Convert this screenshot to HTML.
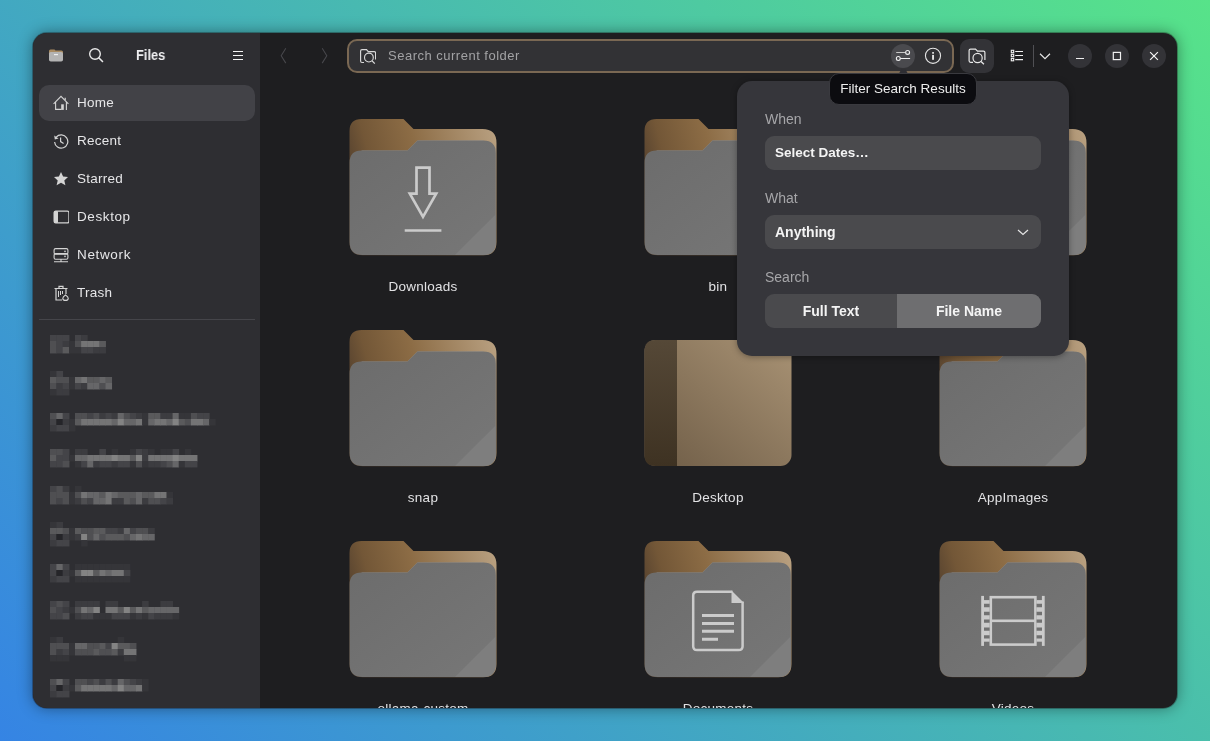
<!DOCTYPE html>
<html><head><meta charset="utf-8">
<style>
*{margin:0;padding:0;box-sizing:border-box}
html,body{width:1210px;height:741px;overflow:hidden}
body{background:linear-gradient(45deg,#3584e4 0%,#57e389 100%);font-family:"Liberation Sans",sans-serif;position:relative}
.abs{position:absolute}
#win{position:absolute;left:33px;top:33px;width:1144px;height:675px;border-radius:14px;overflow:hidden;background:#1e1e20;box-shadow:0 0 0 1px rgba(20,10,10,0.3),0 0 15px rgba(0,0,0,0.42)}
#side{position:absolute;left:0;top:0;width:227px;height:675px;background:#2e2e32}
.t{position:absolute;white-space:nowrap;will-change:transform;color:#e6e6e8;font-size:13.5px;line-height:16px}
.row{position:absolute;left:6px;width:216px;height:36px;border-radius:10px}
.row.sel{background:#424247}
.ico{position:absolute}
.lbl{position:absolute;will-change:transform;width:200px;text-align:center;color:#e2e2e4;font-size:13.5px;line-height:16px;letter-spacing:0.25px}
</style></head><body>
<div id="win">
  <div id="side">
    <!-- header -->
    <svg class="ico" style="left:15px;top:14px" width="16" height="16" viewBox="0 0 16 16">
      <path d="M1,4 Q1,2.5 2.5,2.5 H6.5 L7.5,3.5 H13.5 Q15,3.5 15,5 V8 H1Z" fill="#a98b62"/>
      <rect x="1" y="5" width="14" height="9.5" rx="1.8" fill="#b4b4b4"/>
      <rect x="6" y="7" width="4" height="1.2" fill="#f0f0f0"/>
    </svg>
    <svg class="ico" style="left:55px;top:14px" width="16" height="16" viewBox="0 0 16 16">
      <circle cx="7" cy="7" r="5.3" fill="none" stroke="#e8e8e8" stroke-width="1.4"/>
      <path d="M11,11 L14.5,14.5" stroke="#e8e8e8" stroke-width="1.6" stroke-linecap="round"/>
    </svg>
    <div class="t" style="left:102.6px;top:14.3px;font-weight:bold;font-size:14px;color:#f0f0f2;transform:scaleX(0.92);transform-origin:0 0">Files</div>
    <div class="abs" style="left:200px;top:18px;width:10px;height:1px;background:#f4f4f4"></div>
    <div class="abs" style="left:200px;top:22px;width:10px;height:1px;background:#f4f4f4"></div>
    <div class="abs" style="left:200px;top:26px;width:10px;height:1px;background:#f4f4f4"></div>

    <div class="row sel" style="top:52px"></div>
    <!-- Home -->
    <svg class="ico" style="left:20px;top:62px" width="16" height="16" viewBox="0 0 16 16">
      <path d="M0.6,8.9 L8,1.4 L15.4,8.9 M2.6,6.9 V14.4 H8.5 M13.4,6.9 V15" fill="none" stroke="#d4d4d4" stroke-width="1.1"/>
      <rect x="8.2" y="9.3" width="2.6" height="5.6" fill="#d4d4d4"/>
      <path d="M12.2,2.8 V4.9" stroke="#d4d4d4" stroke-width="1.2"/>
    </svg>
    <div class="t" style="left:44px;top:62px;letter-spacing:0.25px">Home</div>
    <!-- Recent -->
    <svg class="ico" style="left:20px;top:100px" width="16" height="16" viewBox="0 0 16 16">
      <path d="M3.2,4.2 A6.6,6.6 0 1 1 1.6,9" fill="none" stroke="#d4d4d4" stroke-width="1.2"/>
      <path d="M1.2,2.5 L1.8,6.5 L5.5,5.6Z" fill="#d4d4d4"/>
      <path d="M7.6,4.5 V8.6 L10.6,10.6" fill="none" stroke="#d4d4d4" stroke-width="1.2"/>
    </svg>
    <div class="t" style="left:44px;top:100px;letter-spacing:0.25px">Recent</div>
    <!-- Starred -->
    <svg class="ico" style="left:20px;top:138px" width="16" height="16" viewBox="0 0 16 16">
      <path d="M8,1 L10.1,5.6 L15,6.1 L11.3,9.4 L12.4,14.3 L8,11.7 L3.6,14.3 L4.7,9.4 L1,6.1 L5.9,5.6Z" fill="#d4d4d4"/>
    </svg>
    <div class="t" style="left:44px;top:138px;letter-spacing:0.25px">Starred</div>
    <!-- Desktop -->
    <svg class="ico" style="left:20px;top:176px" width="16" height="16" viewBox="0 0 16 16">
      <rect x="1.1" y="2.1" width="14.8" height="11.8" rx="1.6" fill="none" stroke="#d4d4d4" stroke-width="1.2"/>
      <rect x="1" y="2" width="4" height="12" rx="1" fill="#d4d4d4"/>
    </svg>
    <div class="t" style="left:44px;top:176px;letter-spacing:0.6px">Desktop</div>
    <!-- Network -->
    <svg class="ico" style="left:20px;top:214px" width="16" height="16" viewBox="0 0 16 16">
      <rect x="1.1" y="1.6" width="13.8" height="5.6" rx="1.5" fill="none" stroke="#d4d4d4" stroke-width="1.1"/>
      <rect x="1.1" y="6.6" width="13.8" height="5.6" rx="1.5" fill="none" stroke="#d4d4d4" stroke-width="1.1"/>
      <path d="M1,14.8 H15 M8,12 V14.8" stroke="#d4d4d4" stroke-width="1.1"/>
      <circle cx="12" cy="4.4" r="0.8" fill="#d4d4d4"/><circle cx="12" cy="9.4" r="0.8" fill="#d4d4d4"/>
    </svg>
    <div class="t" style="left:44px;top:214px;letter-spacing:0.65px">Network</div>
    <!-- Trash -->
    <svg class="ico" style="left:20px;top:252px" width="16" height="16" viewBox="0 0 16 16">
      <path d="M1.5,3.5 H14.5 M6,3.5 V1.3 H10 V3.5" fill="none" stroke="#d4d4d4" stroke-width="1.2"/>
      <path d="M3,4 V15 H9 M13,4 V9" fill="none" stroke="#d4d4d4" stroke-width="1.2"/>
      <path d="M5.5,6 V12 M7.5,6 V10 M9.5,6 V9" stroke="#d4d4d4" stroke-width="1"/>
      <path d="M12.5,10 Q15.5,12 15.2,13.6 Q15,15.4 12.5,15.4 Q10,15.4 9.8,13.6 Q9.6,12 12.5,10Z" fill="none" stroke="#d4d4d4" stroke-width="1.1"/>
    </svg>
    <div class="t" style="left:44px;top:252px;letter-spacing:0.25px">Trash</div>

    <div class="abs" style="left:6px;top:286px;width:216px;height:1px;background:#45454a"></div>
    <div id="blur"><svg class="abs" style="left:-33px;top:-33px" width="260" height="741" viewBox="0 0 260 741"><rect x="50.00" y="335" width="6.78" height="6.45" fill="#444448"/><rect x="56.33" y="335" width="6.78" height="6.45" fill="#444448"/><rect x="62.66" y="335" width="6.78" height="6.45" fill="#444448"/><rect x="75.00" y="335" width="6.55" height="6.45" fill="#444448"/><rect x="81.10" y="335" width="6.55" height="6.45" fill="#3c3c40"/><rect x="50.00" y="341" width="6.78" height="6.45" fill="#4f4f52"/><rect x="56.33" y="341" width="6.78" height="6.45" fill="#444448"/><rect x="62.66" y="341" width="6.78" height="6.45" fill="#3c3c40"/><rect x="69.00" y="341" width="6.45" height="6.45" fill="#353539"/><rect x="75.00" y="341" width="6.55" height="6.45" fill="#4f4f52"/><rect x="81.10" y="341" width="6.55" height="6.45" fill="#747475"/><rect x="87.20" y="341" width="6.55" height="6.45" fill="#747475"/><rect x="93.30" y="341" width="6.55" height="6.45" fill="#747475"/><rect x="99.40" y="341" width="6.55" height="6.45" fill="#5a5a5c"/><rect x="50.00" y="347" width="6.78" height="6.45" fill="#4f4f52"/><rect x="56.33" y="347" width="6.78" height="6.45" fill="#444448"/><rect x="62.66" y="347" width="6.78" height="6.45" fill="#5a5a5c"/><rect x="69.00" y="347" width="6.45" height="6.45" fill="#353539"/><rect x="75.00" y="347" width="6.55" height="6.45" fill="#353539"/><rect x="81.10" y="347" width="6.55" height="6.45" fill="#444448"/><rect x="87.20" y="347" width="6.55" height="6.45" fill="#444448"/><rect x="93.30" y="347" width="6.55" height="6.45" fill="#3c3c40"/><rect x="99.40" y="347" width="6.55" height="6.45" fill="#3c3c40"/><rect x="50.00" y="371" width="6.78" height="6.45" fill="#353539"/><rect x="56.33" y="371" width="6.78" height="6.45" fill="#444448"/><rect x="50.00" y="377" width="6.78" height="6.45" fill="#5a5a5c"/><rect x="56.33" y="377" width="6.78" height="6.45" fill="#4f4f52"/><rect x="62.66" y="377" width="6.78" height="6.45" fill="#4f4f52"/><rect x="69.00" y="377" width="6.45" height="6.45" fill="#353539"/><rect x="75.00" y="377" width="6.55" height="6.45" fill="#666668"/><rect x="81.10" y="377" width="6.55" height="6.45" fill="#747475"/><rect x="87.20" y="377" width="6.55" height="6.45" fill="#5a5a5c"/><rect x="93.30" y="377" width="6.55" height="6.45" fill="#5a5a5c"/><rect x="99.40" y="377" width="6.55" height="6.45" fill="#666668"/><rect x="105.50" y="377" width="6.55" height="6.45" fill="#5a5a5c"/><rect x="50.00" y="383" width="6.78" height="6.45" fill="#4f4f52"/><rect x="56.33" y="383" width="6.78" height="6.45" fill="#3c3c40"/><rect x="62.66" y="383" width="6.78" height="6.45" fill="#444448"/><rect x="69.00" y="383" width="6.45" height="6.45" fill="#353539"/><rect x="75.00" y="383" width="6.55" height="6.45" fill="#444448"/><rect x="81.10" y="383" width="6.55" height="6.45" fill="#3c3c40"/><rect x="87.20" y="383" width="6.55" height="6.45" fill="#666668"/><rect x="93.30" y="383" width="6.55" height="6.45" fill="#666668"/><rect x="99.40" y="383" width="6.55" height="6.45" fill="#4f4f52"/><rect x="105.50" y="383" width="6.55" height="6.45" fill="#666668"/><rect x="50.00" y="389" width="6.78" height="6.45" fill="#353539"/><rect x="56.33" y="389" width="6.78" height="6.45" fill="#3c3c40"/><rect x="62.66" y="389" width="6.78" height="6.45" fill="#3c3c40"/><rect x="50.00" y="413" width="6.78" height="6.45" fill="#4f4f52"/><rect x="56.33" y="413" width="6.78" height="6.45" fill="#666668"/><rect x="62.66" y="413" width="6.78" height="6.45" fill="#444448"/><rect x="75.00" y="413" width="6.55" height="6.45" fill="#4f4f52"/><rect x="81.10" y="413" width="6.55" height="6.45" fill="#4f4f52"/><rect x="87.20" y="413" width="6.55" height="6.45" fill="#444448"/><rect x="93.30" y="413" width="6.55" height="6.45" fill="#4f4f52"/><rect x="99.40" y="413" width="6.55" height="6.45" fill="#3c3c40"/><rect x="105.50" y="413" width="6.55" height="6.45" fill="#444448"/><rect x="111.60" y="413" width="6.55" height="6.45" fill="#3c3c40"/><rect x="117.70" y="413" width="6.55" height="6.45" fill="#666668"/><rect x="123.80" y="413" width="6.55" height="6.45" fill="#4f4f52"/><rect x="129.90" y="413" width="6.55" height="6.45" fill="#444448"/><rect x="136.00" y="413" width="6.55" height="6.45" fill="#3c3c40"/><rect x="142.10" y="413" width="6.55" height="6.45" fill="#353539"/><rect x="148.20" y="413" width="6.55" height="6.45" fill="#5a5a5c"/><rect x="154.30" y="413" width="6.55" height="6.45" fill="#5a5a5c"/><rect x="160.40" y="413" width="6.55" height="6.45" fill="#3c3c40"/><rect x="166.50" y="413" width="6.55" height="6.45" fill="#3c3c40"/><rect x="172.60" y="413" width="6.55" height="6.45" fill="#666668"/><rect x="178.70" y="413" width="6.55" height="6.45" fill="#353539"/><rect x="184.80" y="413" width="6.55" height="6.45" fill="#353539"/><rect x="190.90" y="413" width="6.55" height="6.45" fill="#4f4f52"/><rect x="197.00" y="413" width="6.55" height="6.45" fill="#444448"/><rect x="203.10" y="413" width="6.55" height="6.45" fill="#444448"/><rect x="50.00" y="419" width="6.78" height="6.45" fill="#444448"/><rect x="56.33" y="419" width="6.78" height="6.45" fill="#252529"/><rect x="62.66" y="419" width="6.78" height="6.45" fill="#3c3c40"/><rect x="69.00" y="419" width="6.45" height="6.45" fill="#353539"/><rect x="75.00" y="419" width="6.55" height="6.45" fill="#5a5a5c"/><rect x="81.10" y="419" width="6.55" height="6.45" fill="#747475"/><rect x="87.20" y="419" width="6.55" height="6.45" fill="#747475"/><rect x="93.30" y="419" width="6.55" height="6.45" fill="#747475"/><rect x="99.40" y="419" width="6.55" height="6.45" fill="#747475"/><rect x="105.50" y="419" width="6.55" height="6.45" fill="#747475"/><rect x="111.60" y="419" width="6.55" height="6.45" fill="#666668"/><rect x="117.70" y="419" width="6.55" height="6.45" fill="#838383"/><rect x="123.80" y="419" width="6.55" height="6.45" fill="#666668"/><rect x="129.90" y="419" width="6.55" height="6.45" fill="#666668"/><rect x="136.00" y="419" width="6.55" height="6.45" fill="#747475"/><rect x="142.10" y="419" width="6.55" height="6.45" fill="#353539"/><rect x="148.20" y="419" width="6.55" height="6.45" fill="#666668"/><rect x="154.30" y="419" width="6.55" height="6.45" fill="#747475"/><rect x="160.40" y="419" width="6.55" height="6.45" fill="#747475"/><rect x="166.50" y="419" width="6.55" height="6.45" fill="#666668"/><rect x="172.60" y="419" width="6.55" height="6.45" fill="#838383"/><rect x="178.70" y="419" width="6.55" height="6.45" fill="#5a5a5c"/><rect x="184.80" y="419" width="6.55" height="6.45" fill="#4f4f52"/><rect x="190.90" y="419" width="6.55" height="6.45" fill="#747475"/><rect x="197.00" y="419" width="6.55" height="6.45" fill="#747475"/><rect x="203.10" y="419" width="6.55" height="6.45" fill="#666668"/><rect x="209.20" y="419" width="6.55" height="6.45" fill="#353539"/><rect x="50.00" y="425" width="6.78" height="6.45" fill="#3c3c40"/><rect x="56.33" y="425" width="6.78" height="6.45" fill="#444448"/><rect x="62.66" y="425" width="6.78" height="6.45" fill="#444448"/><rect x="69.00" y="425" width="6.45" height="6.45" fill="#353539"/><rect x="50.00" y="449" width="6.78" height="6.45" fill="#4f4f52"/><rect x="56.33" y="449" width="6.78" height="6.45" fill="#4f4f52"/><rect x="62.66" y="449" width="6.78" height="6.45" fill="#444448"/><rect x="75.00" y="449" width="6.55" height="6.45" fill="#3c3c40"/><rect x="81.10" y="449" width="6.55" height="6.45" fill="#3c3c40"/><rect x="99.40" y="449" width="6.55" height="6.45" fill="#444448"/><rect x="111.60" y="449" width="6.55" height="6.45" fill="#353539"/><rect x="129.90" y="449" width="6.55" height="6.45" fill="#353539"/><rect x="136.00" y="449" width="6.55" height="6.45" fill="#444448"/><rect x="142.10" y="449" width="6.55" height="6.45" fill="#3c3c40"/><rect x="148.20" y="449" width="6.55" height="6.45" fill="#353539"/><rect x="160.40" y="449" width="6.55" height="6.45" fill="#353539"/><rect x="166.50" y="449" width="6.55" height="6.45" fill="#353539"/><rect x="172.60" y="449" width="6.55" height="6.45" fill="#444448"/><rect x="184.80" y="449" width="6.55" height="6.45" fill="#353539"/><rect x="50.00" y="455" width="6.78" height="6.45" fill="#5a5a5c"/><rect x="56.33" y="455" width="6.78" height="6.45" fill="#444448"/><rect x="62.66" y="455" width="6.78" height="6.45" fill="#444448"/><rect x="69.00" y="455" width="6.45" height="6.45" fill="#353539"/><rect x="75.00" y="455" width="6.55" height="6.45" fill="#666668"/><rect x="81.10" y="455" width="6.55" height="6.45" fill="#666668"/><rect x="87.20" y="455" width="6.55" height="6.45" fill="#747475"/><rect x="93.30" y="455" width="6.55" height="6.45" fill="#747475"/><rect x="99.40" y="455" width="6.55" height="6.45" fill="#747475"/><rect x="105.50" y="455" width="6.55" height="6.45" fill="#747475"/><rect x="111.60" y="455" width="6.55" height="6.45" fill="#838383"/><rect x="117.70" y="455" width="6.55" height="6.45" fill="#747475"/><rect x="123.80" y="455" width="6.55" height="6.45" fill="#747475"/><rect x="129.90" y="455" width="6.55" height="6.45" fill="#5a5a5c"/><rect x="136.00" y="455" width="6.55" height="6.45" fill="#838383"/><rect x="142.10" y="455" width="6.55" height="6.45" fill="#3c3c40"/><rect x="148.20" y="455" width="6.55" height="6.45" fill="#747475"/><rect x="154.30" y="455" width="6.55" height="6.45" fill="#747475"/><rect x="160.40" y="455" width="6.55" height="6.45" fill="#747475"/><rect x="166.50" y="455" width="6.55" height="6.45" fill="#747475"/><rect x="172.60" y="455" width="6.55" height="6.45" fill="#838383"/><rect x="178.70" y="455" width="6.55" height="6.45" fill="#747475"/><rect x="184.80" y="455" width="6.55" height="6.45" fill="#747475"/><rect x="190.90" y="455" width="6.55" height="6.45" fill="#747475"/><rect x="50.00" y="461" width="6.78" height="6.45" fill="#444448"/><rect x="56.33" y="461" width="6.78" height="6.45" fill="#444448"/><rect x="62.66" y="461" width="6.78" height="6.45" fill="#4f4f52"/><rect x="75.00" y="461" width="6.55" height="6.45" fill="#353539"/><rect x="81.10" y="461" width="6.55" height="6.45" fill="#444448"/><rect x="87.20" y="461" width="6.55" height="6.45" fill="#666668"/><rect x="93.30" y="461" width="6.55" height="6.45" fill="#3c3c40"/><rect x="99.40" y="461" width="6.55" height="6.45" fill="#444448"/><rect x="105.50" y="461" width="6.55" height="6.45" fill="#444448"/><rect x="111.60" y="461" width="6.55" height="6.45" fill="#3c3c40"/><rect x="117.70" y="461" width="6.55" height="6.45" fill="#444448"/><rect x="123.80" y="461" width="6.55" height="6.45" fill="#444448"/><rect x="129.90" y="461" width="6.55" height="6.45" fill="#353539"/><rect x="136.00" y="461" width="6.55" height="6.45" fill="#4f4f52"/><rect x="142.10" y="461" width="6.55" height="6.45" fill="#353539"/><rect x="148.20" y="461" width="6.55" height="6.45" fill="#3c3c40"/><rect x="154.30" y="461" width="6.55" height="6.45" fill="#3c3c40"/><rect x="160.40" y="461" width="6.55" height="6.45" fill="#444448"/><rect x="166.50" y="461" width="6.55" height="6.45" fill="#4f4f52"/><rect x="172.60" y="461" width="6.55" height="6.45" fill="#666668"/><rect x="178.70" y="461" width="6.55" height="6.45" fill="#353539"/><rect x="184.80" y="461" width="6.55" height="6.45" fill="#444448"/><rect x="190.90" y="461" width="6.55" height="6.45" fill="#444448"/><rect x="50.00" y="486" width="6.78" height="6.45" fill="#444448"/><rect x="56.33" y="486" width="6.78" height="6.45" fill="#4f4f52"/><rect x="62.66" y="486" width="6.78" height="6.45" fill="#3c3c40"/><rect x="75.00" y="486" width="6.55" height="6.45" fill="#353539"/><rect x="50.00" y="492" width="6.78" height="6.45" fill="#4f4f52"/><rect x="56.33" y="492" width="6.78" height="6.45" fill="#4f4f52"/><rect x="62.66" y="492" width="6.78" height="6.45" fill="#4f4f52"/><rect x="69.00" y="492" width="6.45" height="6.45" fill="#353539"/><rect x="75.00" y="492" width="6.55" height="6.45" fill="#4f4f52"/><rect x="81.10" y="492" width="6.55" height="6.45" fill="#747475"/><rect x="87.20" y="492" width="6.55" height="6.45" fill="#666668"/><rect x="93.30" y="492" width="6.55" height="6.45" fill="#666668"/><rect x="99.40" y="492" width="6.55" height="6.45" fill="#5a5a5c"/><rect x="105.50" y="492" width="6.55" height="6.45" fill="#747475"/><rect x="111.60" y="492" width="6.55" height="6.45" fill="#666668"/><rect x="117.70" y="492" width="6.55" height="6.45" fill="#5a5a5c"/><rect x="123.80" y="492" width="6.55" height="6.45" fill="#5a5a5c"/><rect x="129.90" y="492" width="6.55" height="6.45" fill="#5a5a5c"/><rect x="136.00" y="492" width="6.55" height="6.45" fill="#666668"/><rect x="142.10" y="492" width="6.55" height="6.45" fill="#5a5a5c"/><rect x="148.20" y="492" width="6.55" height="6.45" fill="#5a5a5c"/><rect x="154.30" y="492" width="6.55" height="6.45" fill="#747475"/><rect x="160.40" y="492" width="6.55" height="6.45" fill="#747475"/><rect x="166.50" y="492" width="6.55" height="6.45" fill="#353539"/><rect x="50.00" y="498" width="6.78" height="6.45" fill="#4f4f52"/><rect x="56.33" y="498" width="6.78" height="6.45" fill="#444448"/><rect x="62.66" y="498" width="6.78" height="6.45" fill="#4f4f52"/><rect x="69.00" y="498" width="6.45" height="6.45" fill="#353539"/><rect x="75.00" y="498" width="6.55" height="6.45" fill="#3c3c40"/><rect x="81.10" y="498" width="6.55" height="6.45" fill="#4f4f52"/><rect x="87.20" y="498" width="6.55" height="6.45" fill="#444448"/><rect x="93.30" y="498" width="6.55" height="6.45" fill="#666668"/><rect x="99.40" y="498" width="6.55" height="6.45" fill="#666668"/><rect x="105.50" y="498" width="6.55" height="6.45" fill="#747475"/><rect x="111.60" y="498" width="6.55" height="6.45" fill="#3c3c40"/><rect x="117.70" y="498" width="6.55" height="6.45" fill="#3c3c40"/><rect x="123.80" y="498" width="6.55" height="6.45" fill="#5a5a5c"/><rect x="129.90" y="498" width="6.55" height="6.45" fill="#4f4f52"/><rect x="136.00" y="498" width="6.55" height="6.45" fill="#666668"/><rect x="142.10" y="498" width="6.55" height="6.45" fill="#3c3c40"/><rect x="148.20" y="498" width="6.55" height="6.45" fill="#4f4f52"/><rect x="154.30" y="498" width="6.55" height="6.45" fill="#4f4f52"/><rect x="160.40" y="498" width="6.55" height="6.45" fill="#444448"/><rect x="166.50" y="498" width="6.55" height="6.45" fill="#3c3c40"/><rect x="50.00" y="522" width="6.78" height="6.45" fill="#353539"/><rect x="56.33" y="522" width="6.78" height="6.45" fill="#3c3c40"/><rect x="50.00" y="528" width="6.78" height="6.45" fill="#5a5a5c"/><rect x="56.33" y="528" width="6.78" height="6.45" fill="#5a5a5c"/><rect x="62.66" y="528" width="6.78" height="6.45" fill="#4f4f52"/><rect x="69.00" y="528" width="6.45" height="6.45" fill="#353539"/><rect x="75.00" y="528" width="6.55" height="6.45" fill="#5a5a5c"/><rect x="81.10" y="528" width="6.55" height="6.45" fill="#4f4f52"/><rect x="87.20" y="528" width="6.55" height="6.45" fill="#4f4f52"/><rect x="93.30" y="528" width="6.55" height="6.45" fill="#5a5a5c"/><rect x="99.40" y="528" width="6.55" height="6.45" fill="#5a5a5c"/><rect x="105.50" y="528" width="6.55" height="6.45" fill="#444448"/><rect x="111.60" y="528" width="6.55" height="6.45" fill="#444448"/><rect x="117.70" y="528" width="6.55" height="6.45" fill="#3c3c40"/><rect x="123.80" y="528" width="6.55" height="6.45" fill="#666668"/><rect x="129.90" y="528" width="6.55" height="6.45" fill="#444448"/><rect x="136.00" y="528" width="6.55" height="6.45" fill="#4f4f52"/><rect x="142.10" y="528" width="6.55" height="6.45" fill="#4f4f52"/><rect x="148.20" y="528" width="6.55" height="6.45" fill="#3c3c40"/><rect x="50.00" y="534" width="6.78" height="6.45" fill="#444448"/><rect x="56.33" y="534" width="6.78" height="6.45" fill="#252529"/><rect x="62.66" y="534" width="6.78" height="6.45" fill="#3c3c40"/><rect x="69.00" y="534" width="6.45" height="6.45" fill="#353539"/><rect x="75.00" y="534" width="6.55" height="6.45" fill="#3c3c40"/><rect x="81.10" y="534" width="6.55" height="6.45" fill="#838383"/><rect x="87.20" y="534" width="6.55" height="6.45" fill="#4f4f52"/><rect x="93.30" y="534" width="6.55" height="6.45" fill="#666668"/><rect x="99.40" y="534" width="6.55" height="6.45" fill="#4f4f52"/><rect x="105.50" y="534" width="6.55" height="6.45" fill="#5a5a5c"/><rect x="111.60" y="534" width="6.55" height="6.45" fill="#5a5a5c"/><rect x="117.70" y="534" width="6.55" height="6.45" fill="#5a5a5c"/><rect x="123.80" y="534" width="6.55" height="6.45" fill="#4f4f52"/><rect x="129.90" y="534" width="6.55" height="6.45" fill="#666668"/><rect x="136.00" y="534" width="6.55" height="6.45" fill="#747475"/><rect x="142.10" y="534" width="6.55" height="6.45" fill="#666668"/><rect x="148.20" y="534" width="6.55" height="6.45" fill="#666668"/><rect x="50.00" y="540" width="6.78" height="6.45" fill="#3c3c40"/><rect x="56.33" y="540" width="6.78" height="6.45" fill="#444448"/><rect x="62.66" y="540" width="6.78" height="6.45" fill="#444448"/><rect x="81.10" y="540" width="6.55" height="6.45" fill="#353539"/><rect x="50.00" y="564" width="6.78" height="6.45" fill="#444448"/><rect x="56.33" y="564" width="6.78" height="6.45" fill="#666668"/><rect x="62.66" y="564" width="6.78" height="6.45" fill="#444448"/><rect x="75.00" y="564" width="6.55" height="6.45" fill="#353539"/><rect x="81.10" y="564" width="6.55" height="6.45" fill="#353539"/><rect x="87.20" y="564" width="6.55" height="6.45" fill="#353539"/><rect x="93.30" y="564" width="6.55" height="6.45" fill="#353539"/><rect x="99.40" y="564" width="6.55" height="6.45" fill="#353539"/><rect x="105.50" y="564" width="6.55" height="6.45" fill="#353539"/><rect x="111.60" y="564" width="6.55" height="6.45" fill="#353539"/><rect x="117.70" y="564" width="6.55" height="6.45" fill="#353539"/><rect x="123.80" y="564" width="6.55" height="6.45" fill="#353539"/><rect x="50.00" y="570" width="6.78" height="6.45" fill="#444448"/><rect x="56.33" y="570" width="6.78" height="6.45" fill="#252529"/><rect x="62.66" y="570" width="6.78" height="6.45" fill="#3c3c40"/><rect x="69.00" y="570" width="6.45" height="6.45" fill="#353539"/><rect x="75.00" y="570" width="6.55" height="6.45" fill="#5a5a5c"/><rect x="81.10" y="570" width="6.55" height="6.45" fill="#838383"/><rect x="87.20" y="570" width="6.55" height="6.45" fill="#838383"/><rect x="93.30" y="570" width="6.55" height="6.45" fill="#5a5a5c"/><rect x="99.40" y="570" width="6.55" height="6.45" fill="#747475"/><rect x="105.50" y="570" width="6.55" height="6.45" fill="#666668"/><rect x="111.60" y="570" width="6.55" height="6.45" fill="#747475"/><rect x="117.70" y="570" width="6.55" height="6.45" fill="#747475"/><rect x="123.80" y="570" width="6.55" height="6.45" fill="#444448"/><rect x="50.00" y="576" width="6.78" height="6.45" fill="#3c3c40"/><rect x="56.33" y="576" width="6.78" height="6.45" fill="#444448"/><rect x="62.66" y="576" width="6.78" height="6.45" fill="#444448"/><rect x="75.00" y="576" width="6.55" height="6.45" fill="#353539"/><rect x="81.10" y="576" width="6.55" height="6.45" fill="#353539"/><rect x="87.20" y="576" width="6.55" height="6.45" fill="#353539"/><rect x="93.30" y="576" width="6.55" height="6.45" fill="#353539"/><rect x="99.40" y="576" width="6.55" height="6.45" fill="#353539"/><rect x="105.50" y="576" width="6.55" height="6.45" fill="#353539"/><rect x="111.60" y="576" width="6.55" height="6.45" fill="#353539"/><rect x="117.70" y="576" width="6.55" height="6.45" fill="#353539"/><rect x="123.80" y="576" width="6.55" height="6.45" fill="#353539"/><rect x="50.00" y="601" width="6.78" height="6.45" fill="#444448"/><rect x="56.33" y="601" width="6.78" height="6.45" fill="#4f4f52"/><rect x="62.66" y="601" width="6.78" height="6.45" fill="#444448"/><rect x="75.00" y="601" width="6.55" height="6.45" fill="#3c3c40"/><rect x="81.10" y="601" width="6.55" height="6.45" fill="#3c3c40"/><rect x="87.20" y="601" width="6.55" height="6.45" fill="#3c3c40"/><rect x="93.30" y="601" width="6.55" height="6.45" fill="#3c3c40"/><rect x="105.50" y="601" width="6.55" height="6.45" fill="#3c3c40"/><rect x="111.60" y="601" width="6.55" height="6.45" fill="#3c3c40"/><rect x="142.10" y="601" width="6.55" height="6.45" fill="#3c3c40"/><rect x="160.40" y="601" width="6.55" height="6.45" fill="#3c3c40"/><rect x="166.50" y="601" width="6.55" height="6.45" fill="#3c3c40"/><rect x="50.00" y="607" width="6.78" height="6.45" fill="#4f4f52"/><rect x="56.33" y="607" width="6.78" height="6.45" fill="#444448"/><rect x="62.66" y="607" width="6.78" height="6.45" fill="#3c3c40"/><rect x="69.00" y="607" width="6.45" height="6.45" fill="#353539"/><rect x="75.00" y="607" width="6.55" height="6.45" fill="#4f4f52"/><rect x="81.10" y="607" width="6.55" height="6.45" fill="#747475"/><rect x="87.20" y="607" width="6.55" height="6.45" fill="#666668"/><rect x="93.30" y="607" width="6.55" height="6.45" fill="#838383"/><rect x="105.50" y="607" width="6.55" height="6.45" fill="#747475"/><rect x="111.60" y="607" width="6.55" height="6.45" fill="#747475"/><rect x="117.70" y="607" width="6.55" height="6.45" fill="#5a5a5c"/><rect x="123.80" y="607" width="6.55" height="6.45" fill="#838383"/><rect x="129.90" y="607" width="6.55" height="6.45" fill="#5a5a5c"/><rect x="136.00" y="607" width="6.55" height="6.45" fill="#747475"/><rect x="142.10" y="607" width="6.55" height="6.45" fill="#5a5a5c"/><rect x="148.20" y="607" width="6.55" height="6.45" fill="#666668"/><rect x="154.30" y="607" width="6.55" height="6.45" fill="#666668"/><rect x="160.40" y="607" width="6.55" height="6.45" fill="#666668"/><rect x="166.50" y="607" width="6.55" height="6.45" fill="#666668"/><rect x="172.60" y="607" width="6.55" height="6.45" fill="#666668"/><rect x="50.00" y="613" width="6.78" height="6.45" fill="#444448"/><rect x="56.33" y="613" width="6.78" height="6.45" fill="#444448"/><rect x="62.66" y="613" width="6.78" height="6.45" fill="#4f4f52"/><rect x="75.00" y="613" width="6.55" height="6.45" fill="#3c3c40"/><rect x="81.10" y="613" width="6.55" height="6.45" fill="#444448"/><rect x="87.20" y="613" width="6.55" height="6.45" fill="#444448"/><rect x="93.30" y="613" width="6.55" height="6.45" fill="#353539"/><rect x="99.40" y="613" width="6.55" height="6.45" fill="#353539"/><rect x="105.50" y="613" width="6.55" height="6.45" fill="#353539"/><rect x="111.60" y="613" width="6.55" height="6.45" fill="#444448"/><rect x="117.70" y="613" width="6.55" height="6.45" fill="#444448"/><rect x="123.80" y="613" width="6.55" height="6.45" fill="#444448"/><rect x="129.90" y="613" width="6.55" height="6.45" fill="#353539"/><rect x="136.00" y="613" width="6.55" height="6.45" fill="#3c3c40"/><rect x="142.10" y="613" width="6.55" height="6.45" fill="#353539"/><rect x="148.20" y="613" width="6.55" height="6.45" fill="#444448"/><rect x="154.30" y="613" width="6.55" height="6.45" fill="#3c3c40"/><rect x="160.40" y="613" width="6.55" height="6.45" fill="#3c3c40"/><rect x="166.50" y="613" width="6.55" height="6.45" fill="#3c3c40"/><rect x="172.60" y="613" width="6.55" height="6.45" fill="#353539"/><rect x="50.00" y="637" width="6.78" height="6.45" fill="#353539"/><rect x="56.33" y="637" width="6.78" height="6.45" fill="#3c3c40"/><rect x="117.70" y="637" width="6.55" height="6.45" fill="#353539"/><rect x="50.00" y="643" width="6.78" height="6.45" fill="#4f4f52"/><rect x="56.33" y="643" width="6.78" height="6.45" fill="#4f4f52"/><rect x="62.66" y="643" width="6.78" height="6.45" fill="#4f4f52"/><rect x="69.00" y="643" width="6.45" height="6.45" fill="#353539"/><rect x="75.00" y="643" width="6.55" height="6.45" fill="#666668"/><rect x="81.10" y="643" width="6.55" height="6.45" fill="#666668"/><rect x="87.20" y="643" width="6.55" height="6.45" fill="#4f4f52"/><rect x="93.30" y="643" width="6.55" height="6.45" fill="#4f4f52"/><rect x="99.40" y="643" width="6.55" height="6.45" fill="#5a5a5c"/><rect x="105.50" y="643" width="6.55" height="6.45" fill="#444448"/><rect x="111.60" y="643" width="6.55" height="6.45" fill="#838383"/><rect x="117.70" y="643" width="6.55" height="6.45" fill="#5a5a5c"/><rect x="123.80" y="643" width="6.55" height="6.45" fill="#5a5a5c"/><rect x="129.90" y="643" width="6.55" height="6.45" fill="#4f4f52"/><rect x="50.00" y="649" width="6.78" height="6.45" fill="#4f4f52"/><rect x="56.33" y="649" width="6.78" height="6.45" fill="#3c3c40"/><rect x="62.66" y="649" width="6.78" height="6.45" fill="#444448"/><rect x="69.00" y="649" width="6.45" height="6.45" fill="#353539"/><rect x="75.00" y="649" width="6.55" height="6.45" fill="#4f4f52"/><rect x="81.10" y="649" width="6.55" height="6.45" fill="#4f4f52"/><rect x="87.20" y="649" width="6.55" height="6.45" fill="#4f4f52"/><rect x="93.30" y="649" width="6.55" height="6.45" fill="#5a5a5c"/><rect x="99.40" y="649" width="6.55" height="6.45" fill="#4f4f52"/><rect x="105.50" y="649" width="6.55" height="6.45" fill="#4f4f52"/><rect x="111.60" y="649" width="6.55" height="6.45" fill="#5a5a5c"/><rect x="117.70" y="649" width="6.55" height="6.45" fill="#3c3c40"/><rect x="123.80" y="649" width="6.55" height="6.45" fill="#747475"/><rect x="129.90" y="649" width="6.55" height="6.45" fill="#747475"/><rect x="50.00" y="655" width="6.78" height="6.45" fill="#353539"/><rect x="56.33" y="655" width="6.78" height="6.45" fill="#353539"/><rect x="62.66" y="655" width="6.78" height="6.45" fill="#353539"/><rect x="123.80" y="655" width="6.55" height="6.45" fill="#353539"/><rect x="129.90" y="655" width="6.55" height="6.45" fill="#353539"/><rect x="50.00" y="679" width="6.78" height="6.45" fill="#4f4f52"/><rect x="56.33" y="679" width="6.78" height="6.45" fill="#666668"/><rect x="62.66" y="679" width="6.78" height="6.45" fill="#444448"/><rect x="75.00" y="679" width="6.55" height="6.45" fill="#4f4f52"/><rect x="81.10" y="679" width="6.55" height="6.45" fill="#4f4f52"/><rect x="87.20" y="679" width="6.55" height="6.45" fill="#444448"/><rect x="93.30" y="679" width="6.55" height="6.45" fill="#4f4f52"/><rect x="99.40" y="679" width="6.55" height="6.45" fill="#3c3c40"/><rect x="105.50" y="679" width="6.55" height="6.45" fill="#4f4f52"/><rect x="111.60" y="679" width="6.55" height="6.45" fill="#3c3c40"/><rect x="117.70" y="679" width="6.55" height="6.45" fill="#666668"/><rect x="123.80" y="679" width="6.55" height="6.45" fill="#4f4f52"/><rect x="129.90" y="679" width="6.55" height="6.45" fill="#444448"/><rect x="136.00" y="679" width="6.55" height="6.45" fill="#3c3c40"/><rect x="142.10" y="679" width="6.55" height="6.45" fill="#353539"/><rect x="50.00" y="685" width="6.78" height="6.45" fill="#444448"/><rect x="56.33" y="685" width="6.78" height="6.45" fill="#252529"/><rect x="62.66" y="685" width="6.78" height="6.45" fill="#3c3c40"/><rect x="69.00" y="685" width="6.45" height="6.45" fill="#353539"/><rect x="75.00" y="685" width="6.55" height="6.45" fill="#5a5a5c"/><rect x="81.10" y="685" width="6.55" height="6.45" fill="#747475"/><rect x="87.20" y="685" width="6.55" height="6.45" fill="#747475"/><rect x="93.30" y="685" width="6.55" height="6.45" fill="#747475"/><rect x="99.40" y="685" width="6.55" height="6.45" fill="#747475"/><rect x="105.50" y="685" width="6.55" height="6.45" fill="#747475"/><rect x="111.60" y="685" width="6.55" height="6.45" fill="#666668"/><rect x="117.70" y="685" width="6.55" height="6.45" fill="#838383"/><rect x="123.80" y="685" width="6.55" height="6.45" fill="#666668"/><rect x="129.90" y="685" width="6.55" height="6.45" fill="#666668"/><rect x="136.00" y="685" width="6.55" height="6.45" fill="#747475"/><rect x="142.10" y="685" width="6.55" height="6.45" fill="#353539"/><rect x="50.00" y="691" width="6.78" height="6.45" fill="#3c3c40"/><rect x="56.33" y="691" width="6.78" height="6.45" fill="#444448"/><rect x="62.66" y="691" width="6.78" height="6.45" fill="#444448"/></svg></div>
  </div>

  <!-- content header -->
  <svg class="abs" style="left:241px;top:12px" width="60" height="20" viewBox="274 45 60 20"><path d="M285.8,48.3 L281.2,55.7 L285.8,63.1 M322.2,48.3 L326.8,55.7 L322.2,63.1" fill="none" stroke="#48484c" stroke-width="1.05"/></svg>
  

  <div class="abs" style="left:314px;top:6px;width:607px;height:34px;border-radius:10px;background:#323235;border:2px solid #7a6853"></div>
  <svg class="abs" style="left:325px;top:14px" width="18" height="18" viewBox="358 47 18 18">
    <path d="M364,62.5 H362 Q360.6,62.5 360.6,61 V51 Q360.6,49.6 362,49.6 H366.5 L368.3,51.6 H374.2 Q375.6,51.6 375.6,53 V59.5" fill="none" stroke="#d8d8d8" stroke-width="1.15"/>
    <circle cx="368.9" cy="57.6" r="4.4" fill="none" stroke="#d8d8d8" stroke-width="1.15"/>
    <path d="M372.2,61 L374.8,63.6" stroke="#d8d8d8" stroke-width="1.2"/>
  </svg>
  <div class="t" style="left:355px;top:15px;color:#a2a2a4;font-size:13px;letter-spacing:0.5px">Search current folder</div>
  <div class="abs" style="left:858px;top:11px;width:24px;height:24px;border-radius:12px;background:#4a4a4e"></div>
  <svg class="abs" style="left:850px;top:12px" width="100" height="22" viewBox="883 45 100 22">
    <path d="M896.2,52.4 H905.3" stroke="#c8c8c8" stroke-width="1.05"/>
    <path d="M900.3,58.5 H910.1" stroke="#f0f0f0" stroke-width="1.05"/>
    <circle cx="907.6" cy="52.4" r="1.95" fill="none" stroke="#f0f0f0" stroke-width="1.1"/>
    <circle cx="898.3" cy="58.5" r="1.95" fill="none" stroke="#f0f0f0" stroke-width="1.1"/>
    <circle cx="933" cy="55.8" r="7.55" fill="none" stroke="#e4e4e4" stroke-width="1.1"/>
    <rect x="932.1" y="54.9" width="1.9" height="4.9" fill="#e4e4e4"/>
    <rect x="932.1" y="52.1" width="1.9" height="1.6" fill="#e4e4e4"/>
  </svg>

  <div class="abs" style="left:927px;top:6px;width:34px;height:34px;border-radius:9px;background:#333337"></div>
  <svg class="abs" style="left:933px;top:14px" width="20" height="20" viewBox="966 47 20 20">
    <path d="M973,62.3 H970.6 Q969.1,62.3 969.1,60.8 V50.5 Q969.1,49.1 970.6,49.1 H975.5 L977.5,51.2 H983.5 Q984.9,51.2 984.9,52.6 V60" fill="none" stroke="#e8e8e8" stroke-width="1.2"/>
    <circle cx="977.6" cy="58" r="4.6" fill="none" stroke="#e8e8e8" stroke-width="1.2"/>
    <path d="M981.1,61.5 L983.9,64.3" stroke="#e8e8e8" stroke-width="1.3"/>
  </svg>
  <svg class="abs" style="left:975px;top:15px" width="16" height="16" viewBox="1008 48 16 16">
    <rect x="1011.3" y="50.3" width="2.4" height="2.4" fill="none" stroke="#f0f0f0" stroke-width="1.1"/>
    <rect x="1011.3" y="54.3" width="2.4" height="2.4" fill="none" stroke="#f0f0f0" stroke-width="1.1"/>
    <rect x="1011.3" y="58.4" width="2.4" height="2.4" fill="none" stroke="#f0f0f0" stroke-width="1.1"/>
    <path d="M1015.2,51.5 H1023 M1015.2,55.5 H1023 M1015.2,59.6 H1023" stroke="#f0f0f0" stroke-width="1.2"/>
  </svg>
  <div class="abs" style="left:1000px;top:12px;width:1px;height:22px;background:#505054"></div>
  <svg class="abs" style="left:1004px;top:15px" width="16" height="16" viewBox="1037 48 16 16"><path d="M1040,53.8 L1045,58.6 L1050,53.8" fill="none" stroke="#e6e6e6" stroke-width="1.2"/></svg>

  <div class="abs" style="left:1035px;top:11px;width:24px;height:24px;border-radius:12px;background:#333337"></div>
  <div class="abs" style="left:1042.7px;top:25px;width:8.6px;height:1.3px;background:#f0f0f0"></div>
  <div class="abs" style="left:1072px;top:11px;width:24px;height:24px;border-radius:12px;background:#333337"></div>
  <svg class="abs" style="left:1076px;top:16px" width="16" height="16" viewBox="1109 49 16 16"><rect x="1113.3" y="52.4" width="7.2" height="7.2" fill="none" stroke="#f0f0f0" stroke-width="1.2"/></svg>
  <div class="abs" style="left:1109px;top:11px;width:24px;height:24px;border-radius:12px;background:#333337"></div>
  <svg class="ico" style="left:1113px;top:15px" width="16" height="16" viewBox="0 0 16 16"><path d="M4.1,4.1 L11.9,11.9 M11.9,4.1 L4.1,11.9" stroke="#f0f0f0" stroke-width="1.25"/></svg>

  <div id="grid"><svg class="abs" style="left:-33px;top:-33px" width="1210" height="741" viewBox="0 0 1210 741">
<defs>
<linearGradient id="gb" gradientUnits="userSpaceOnUse" x1="0" y1="40" x2="148" y2="0"><stop offset="0" stop-color="#5a4530"/><stop offset="0.13" stop-color="#735737"/><stop offset="0.43" stop-color="#8c6c45"/><stop offset="0.92" stop-color="#b49b7b"/><stop offset="1" stop-color="#bca483"/></linearGradient>
<linearGradient id="gf" x1="0" y1="0" x2="1" y2="1">
<stop offset="0" stop-color="#6c6c6c"/><stop offset="1" stop-color="#777777"/></linearGradient>
<linearGradient id="gd" x1="0" y1="1" x2="1" y2="0">
<stop offset="0" stop-color="#6e5c46"/><stop offset="1" stop-color="#a89274"/></linearGradient>
<linearGradient id="gds" x1="0" y1="0" x2="0" y2="1">
<stop offset="0" stop-color="#554837"/><stop offset="1" stop-color="#3e3222"/></linearGradient>
<g id="fold">
<path d="M0.5,13 Q0.5,1 12.5,1 H54.5 L64.5,11 H133.5 Q147.5,11 147.5,25 V124 Q147.5,137.3 134.2,137.3 H13.8 Q0.5,137.3 0.5,124 Z" fill="url(#gb)"/>
<path d="M0.6,44.5 Q0.6,32.5 12.6,32.5 H58.5 L68.5,22.5 H134.3 Q146.8,22.5 146.8,35 V124 Q146.8,137 133.8,137 H13.6 Q0.6,137 0.6,124 Z" fill="url(#gf)"/>
<path d="M12.6,32.5 H58.5 L68.5,22.5 H134.3" fill="none" stroke="#8a8a8a" stroke-width="0.8" opacity="0.5"/>
<path d="M106,137 L146.8,96.2 V124 Q146.8,137 133.8,137 Z" fill="#7e7e7e"/>
</g>
</defs>
<use href="#fold" x="349" y="118"/>
<g transform="translate(0,0)" fill="none" stroke="#cbcbcb" stroke-width="2.7"><path d="M416.5,167.7 H429.5 V193.7 H436.2 L423,216.8 L409.8,193.7 H416.5 Z" stroke-linejoin="miter"/><path d="M404.7,230.5 H441.4"/></g>
<use href="#fold" x="644" y="118"/>
<use href="#fold" x="939" y="118"/>
<use href="#fold" x="349" y="329"/>
<g transform="translate(644,329)"><rect x="0.5" y="11" width="147" height="126" rx="11" fill="url(#gd)"/><path d="M11.5,11 H33 V137 H11.5 Q0.5,137 0.5,126 V22 Q0.5,11 11.5,11Z" fill="url(#gds)"/></g>
<use href="#fold" x="939" y="329"/>
<use href="#fold" x="349" y="540"/>
<use href="#fold" x="644" y="540"/>
<g transform="translate(0,0)"><path d="M732.5,591.7 H697 Q693.2,591.7 693.2,595.5 V646.3 Q693.2,650.1 697,650.1 H738.6 Q742.6,650.1 742.6,646.3 V601.5" fill="none" stroke="#cbcbcb" stroke-width="2.5"/><path d="M731.5,590.5 L744,603 H731.5Z" fill="#cbcbcb"/><path d="M702,615.4 H734 M702,623.4 H734 M702,631.3 H734 M702,639.2 H718" stroke="#cbcbcb" stroke-width="3"/></g>
<use href="#fold" x="939" y="540"/>
<g transform="translate(0,0)" fill="#cbcbcb"><rect x="981.2" y="595.9" width="2.8" height="50"/><rect x="1041.9" y="595.9" width="2.8" height="50"/><rect x="984" y="600.1" width="5.6" height="41.6"/><rect x="1036.6" y="600.1" width="5.4" height="41.6"/><rect x="990.8" y="597.2" width="44.6" height="47.4" fill="none" stroke="#cbcbcb" stroke-width="2.6"/><rect x="990.5" y="619.5" width="45" height="2.6"/><path d="M984,605.5h5.6M984,613.5h5.6M984,621.2h5.6M984,629.1h5.6M984,636.9h5.6M1036.6,605.5h5.4M1036.6,613.5h5.4M1036.6,621.2h5.4M1036.6,629.1h5.4M1036.6,636.9h5.4" stroke="#717171" stroke-width="3.3"/></g>
</svg>
<div class="lbl" style="left:290px;top:246px">Downloads</div>
<div class="lbl" style="left:585px;top:246px">bin</div>
<div class="lbl" style="left:290px;top:457px">snap</div>
<div class="lbl" style="left:585px;top:457px">Desktop</div>
<div class="lbl" style="left:880px;top:457px">AppImages</div>
<div class="lbl" style="left:290px;top:668px">ollama-custom</div>
<div class="lbl" style="left:585px;top:668px">Documents</div>
<div class="lbl" style="left:880px;top:668px">Videos</div></div>
</div>
<div id="pop">
  <div class="abs" style="left:737px;top:81px;width:332px;height:275px;border-radius:15px;background:#36363b;box-shadow:0 1px 6px rgba(0,0,0,0.35)"></div>
  <div class="t" style="left:765px;top:111px;color:#a6a6a9;font-size:14px">When</div>
  <div class="abs" style="left:765px;top:136px;width:276px;height:34px;border-radius:9px;background:#4a4a4d"></div>
  <div class="t" style="left:775px;top:145px;font-weight:bold;color:#f4f4f4">Select Dates…</div>
  <div class="t" style="left:765px;top:190px;color:#a6a6a9;font-size:14px">What</div>
  <div class="abs" style="left:765px;top:215px;width:276px;height:34px;border-radius:9px;background:#4a4a4d"></div>
  <div class="t" style="left:775px;top:224px;font-weight:bold;font-size:14px;color:#f4f4f4">Anything</div>
  <svg class="ico" style="left:1015px;top:224px" width="16" height="16" viewBox="0 0 16 16"><path d="M3,6 L8,10.5 L13,6" fill="none" stroke="#e6e6e6" stroke-width="1.2"/></svg>
  <div class="t" style="left:765px;top:269px;color:#a6a6a9;font-size:14px">Search</div>
  <div class="abs" style="left:765px;top:294px;width:276px;height:34px;border-radius:9px;background:#4a4a4d;overflow:hidden">
    <div class="abs" style="left:132px;top:0;width:144px;height:34px;background:#6e6e70"></div>
  </div>
  <div class="t" style="left:765px;top:303px;width:132px;text-align:center;font-weight:bold;font-size:14px;color:#f4f4f4">Full Text</div>
  <div class="t" style="left:897px;top:303px;width:144px;text-align:center;font-weight:bold;font-size:14px;color:#f4f4f4">File Name</div>
  <svg class="abs" style="left:0;top:0" width="1210" height="100" viewBox="0 0 1210 100"><path d="M899.3,73 L901.2,69.6 H905.6 L907.5,73 Z" fill="#2e2e33"/></svg>
  <div class="abs" style="left:829px;top:73px;width:148px;height:31.6px;border-radius:10px;background:#0c0c10;border:1px solid #3a3a3f"></div>
  <div class="t" style="left:829px;top:81px;width:148px;text-align:center;color:#eeeeee">Filter Search Results</div>
</div>
</body></html>
